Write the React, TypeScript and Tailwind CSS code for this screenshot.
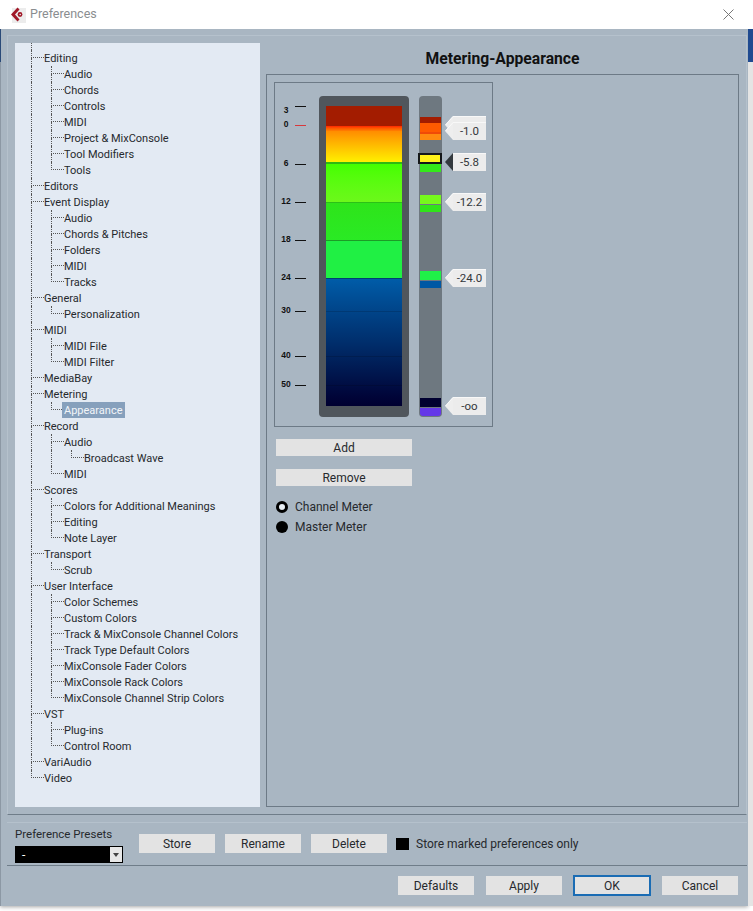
import React from "react";

type Node = { label: string; selected?: boolean; children?: Node[] };

const leaf = (...labels: string[]): Node[] => labels.map((label) => ({ label }));

const tree: Node[] = [
  { label: "Editing", children: leaf("Audio", "Chords", "Controls", "MIDI", "Project & MixConsole", "Tool Modifiers", "Tools") },
  { label: "Editors" },
  { label: "Event Display", children: leaf("Audio", "Chords & Pitches", "Folders", "MIDI", "Tracks") },
  { label: "General", children: leaf("Personalization") },
  { label: "MIDI", children: leaf("MIDI File", "MIDI Filter") },
  { label: "MediaBay" },
  { label: "Metering", children: [{ label: "Appearance", selected: true }] },
  { label: "Record", children: [{ label: "Audio", children: leaf("Broadcast Wave") }, { label: "MIDI" }] },
  { label: "Scores", children: leaf("Colors for Additional Meanings", "Editing", "Note Layer") },
  { label: "Transport", children: leaf("Scrub") },
  {
    label: "User Interface",
    children: leaf(
      "Color Schemes",
      "Custom Colors",
      "Track & MixConsole Channel Colors",
      "Track Type Default Colors",
      "MixConsole Fader Colors",
      "MixConsole Rack Colors",
      "MixConsole Channel Strip Colors"
    ),
  },
  { label: "VST", children: leaf("Plug-ins", "Control Room") },
  { label: "VariAudio" },
  { label: "Video" },
];

function TreeRows({ nodes, trail }: { nodes: Node[]; trail: boolean[] }) {
  return (
    <>
      {nodes.map((n, i) => {
        const last = i === nodes.length - 1;
        return (
          <React.Fragment key={n.label + i}>
            <div className="flex h-4 items-stretch">
              {trail.map((cont, k) => (
                <div key={k} className={`w-5 shrink-0 ${cont ? "border-l border-dotted border-[#555]" : ""}`} />
              ))}
              <div className="flex w-[13px] shrink-0 flex-col">
                <div className="h-2 border-b border-l border-dotted border-[#555]" />
                <div className={`h-2 ${last ? "" : "border-l border-dotted border-[#555]"}`} />
              </div>
              <span
                className={`h-4 text-[11px] leading-[18px] whitespace-nowrap ${
                  n.selected ? "-ml-0.5 bg-[#86a0bc] px-0.5 text-[#f2f5f9]" : "text-[#26292d]"
                }`}
              >
                {n.label}
              </span>
            </div>
            {n.children && <TreeRows nodes={n.children} trail={[...trail, !last]} />}
          </React.Fragment>
        );
      })}
    </>
  );
}

const ticks = [
  { l: "3", y: 106, ly: 110 },
  { l: "0", y: 125, ly: 124, red: true },
  { l: "6", y: 164, ly: 163 },
  { l: "12", y: 202, ly: 201 },
  { l: "18", y: 240, ly: 239 },
  { l: "24", y: 278, ly: 277 },
  { l: "30", y: 311, ly: 310 },
  { l: "40", y: 356, ly: 355 },
  { l: "50", y: 385, ly: 384 },
];

const chips = [
  { y: 117, h: 6, c: "bg-[#a31c00]" },
  { y: 123, h: 9, c: "bg-[#ff5a00]" },
  { y: 132, h: 2, c: "bg-[#f04a08]" },
  { y: 134, h: 6, c: "bg-[#ff8a10]" },
  { y: 164, h: 8, c: "bg-[#34ea1a]" },
  { y: 195, h: 9, c: "bg-[#76f81c]" },
  { y: 205, h: 7, c: "bg-[#30e41a]" },
  { y: 271, h: 9, c: "bg-[#20f048]" },
  { y: 281, h: 7, c: "bg-[#0058a4]" },
  { y: 398, h: 9, c: "bg-[#000030]" },
  { y: 408, h: 8, c: "bg-[#6438e8] rounded-b-[3px]" },
];

function Tag({ t, y, arrow = "#eeeeee", dark }: { t?: string; y: number; arrow?: string; dark?: boolean }) {
  return (
    <div className="absolute left-[445px] flex h-[18px] items-stretch" style={{ top: y - 83 }}>
      <svg width="8" height="18" className="shrink-0">
        <path d="M8 0 L0 9 L8 18 Z" fill={arrow} />
        {!dark && <path d="M8 0.5 L0.5 9" stroke="#fafafa" strokeWidth="1" fill="none" />}
      </svg>
      <div className="flex w-[33px] items-center justify-center border-t border-[#f8f8f8] bg-[#ececec] text-[11.5px] text-[#33373b]">
        {t}
      </div>
    </div>
  );
}

function Meter() {
  return (
    <div className="relative mt-[7px] h-[345px] w-[219px] border border-[#6d7a86] [&>*]:ml-[-275px]">
      {ticks.map((t) => (
        <React.Fragment key={t.l}>
          <div
            className="absolute left-[276px] w-5 text-center text-[8.5px] leading-[10px] font-bold text-[#111] [font-family:'Liberation_Sans',sans-serif]"
            style={{ top: t.ly - 88 }}
          >
            {t.l}
          </div>
          <div
            className={`absolute left-[295px] h-px w-[11px] ${t.red ? "bg-[#d8383c]" : "bg-[#111]"}`}
            style={{ top: t.y - 83 }}
          />
        </React.Fragment>
      ))}
      <div className="absolute left-[319px] top-[13px] flex h-[321px] w-[90px] flex-col rounded-[4px] bg-[#50565c] pb-[11px] pl-[7px] pr-[7px] pt-[10px]">
        <div className="h-[20px] bg-[#a31c00]" />
        <div className="h-[5px] bg-gradient-to-b from-[#ff2000] to-[#ff8000]" />
        <div className="h-[31px] bg-gradient-to-b from-[#ff8c00] to-[#fff000]" />
        <div className="h-[2px] bg-[#2fb812]" />
        <div className="h-[38px] bg-gradient-to-b from-[#44ff00] to-[#6cf81a]" />
        <div className="h-[38px] border-t border-[#2cc018] bg-gradient-to-b from-[#2ee41a] to-[#2aea24]" />
        <div className="h-[38px] border-t border-[#1c9c28] bg-[#20f044]" />
        <div className="relative h-[128px] border-t border-[#004070] bg-gradient-to-b from-[#005ca8] via-[#002e6c] to-[#000030]">
          <div className="absolute inset-x-0 top-[32px] h-px bg-black/15" />
          <div className="absolute inset-x-0 top-[77px] h-px bg-black/15" />
          <div className="absolute inset-x-0 top-[106px] h-px bg-black/15" />
        </div>
      </div>
      <div className="absolute left-[419px] top-[13px] h-[321px] w-[23px] rounded-[4px] bg-[#6e7880]" />
      {chips.map((c) => (
        <div key={c.y} className={`absolute left-[420px] w-[21px] ${c.c}`} style={{ top: c.y - 83, height: c.h }} />
      ))}
      <div className="absolute left-[418px] top-[70px] h-[11px] w-[24px] border-2 border-[#15181a] bg-[#fff21a]" />
      <Tag y={116} />
      <Tag t="-1.0" y={122} />
      <Tag t="-5.8" y={153} arrow="#33393e" dark />
      <Tag t="-12.2" y={193} />
      <Tag t="-24.0" y={269} />
      <Tag t="-oo" y={397} />
    </div>
  );
}

function Btn({ children, w, h = "h-[19px]", focus }: { children: React.ReactNode; w: string; h?: string; focus?: boolean }) {
  return (
    <button
      className={`${w} ${h} flex items-center justify-center bg-[#e3e3e3] text-[#26292d] ${
        focus ? "border-2 border-[#1a6cb4]" : ""
      }`}
    >
      {children}
    </button>
  );
}

export default function App() {
  return (
    <div className="flex h-[911px] w-[753px] items-start bg-white text-[12px] [font-family:'Roboto',sans-serif]">
      <div className="flex h-[906px] w-[748px] flex-col shadow-[0_1px_4px_rgba(0,0,0,0.35)]">
        <div className="flex h-[29px] shrink-0 items-center justify-between bg-white pl-[10px] pr-[14px]">
          <div className="flex items-center gap-[4px]">
            <svg width="16" height="16" viewBox="0 0 16 16">
              <rect x="2" y="1" width="14" height="15" fill="#ececec" />
              <path d="M7.5 0.5 L1 7.5 L7.5 14.5 L9.5 12.5 L5 7.5 L9.5 2.5 Z" fill="#a01828" />
              <circle cx="10" cy="7.5" r="2.4" fill="#a01828" />
              <circle cx="10.2" cy="7.5" r="0.8" fill="#f2e4e4" />
            </svg>
            <span className="text-[12.5px] text-[#8a8d90]">Preferences</span>
          </div>
          <svg width="11" height="11" viewBox="0 0 11 11" stroke="#777" strokeWidth="1">
            <path d="M0.5 0.5 L10.5 10.5 M10.5 0.5 L0.5 10.5" />
          </svg>
        </div>
        <div className="flex flex-1">
          <div className="flex w-px shrink-0 flex-col bg-[#8c98a4]">
            <div className="h-[33px] bg-[#2a4a78]" />
          </div>
          <div className="flex-1 bg-[#a9b6c2] pl-[6px] pr-px pt-[6px]">
            <div className="h-[780px] border border-[#b5c1cc] border-b-[#6f7d89] px-[7px] pt-[7px]">
              <div className="flex h-[764px] gap-[6px]">
                <div className="h-full w-[245px] overflow-hidden bg-[#e3eaf3] pl-4">
                  <div className="h-[7px] border-l border-dotted border-[#555]" />
                  <TreeRows nodes={tree} trail={[]} />
                </div>
                <div className="flex h-full w-[473px] flex-col">
                  <div className="flex h-[31px] shrink-0 items-center justify-center text-[15.7px] font-bold text-[#111]">
                    Metering-Appearance
                  </div>
                  <div className="flex-1 border border-[#6d7a86] px-[7px]">
                    <Meter />
                    <div className="mt-[12px] flex w-[136px] flex-col gap-[13px] pl-[2px]">
                      <Btn w="w-[136px]" h="h-[17px]">Add</Btn>
                      <Btn w="w-[136px]" h="h-[17px]">Remove</Btn>
                    </div>
                    <div className="mt-[13px] flex flex-col gap-1 pl-[2px] text-[#26292d]">
                      <div className="flex h-4 items-center gap-[7px]">
                        <span className="h-[12px] w-[12px] rounded-full border-[3px] border-black bg-[#e8eef4]" />
                        Channel Meter
                      </div>
                      <div className="flex h-4 items-center gap-[7px]">
                        <span className="h-[12px] w-[12px] rounded-full bg-black" />
                        Master Meter
                      </div>
                    </div>
                  </div>
                </div>
              </div>
            </div>
            <div className="mt-[7px] flex h-[44px] items-start border-y border-[#6f7d89] border-t-[#b5c1cc] pl-[8px] text-[#26292d]">
              <div className="mt-[3px] flex w-[124px] flex-col">
                <span className="h-4 text-[11.5px] leading-4">Preference Presets</span>
                <div className="mt-1 flex h-[17px] w-[108px] items-center justify-between bg-black pl-[7px] pr-px text-white">
                  <span>-</span>
                  <span className="flex h-[15px] w-3 items-center justify-center bg-[#e8e8e8]">
                    <svg width="6" height="4"><path d="M0 0 H6 L3 4 Z" fill="#444" /></svg>
                  </span>
                </div>
              </div>
              <div className="mt-[11px] flex items-center gap-[10px]">
                <Btn w="w-[76px]">Store</Btn>
                <Btn w="w-[76px]">Rename</Btn>
                <Btn w="w-[76px]">Delete</Btn>
              </div>
              <div className="ml-[9px] mt-[11px] flex h-[19px] items-center gap-[7px]">
                <span className="h-[12px] w-[13px] bg-black" />
                Store marked preferences only
              </div>
            </div>
            <div className="flex items-center justify-end gap-[11px] pr-[9px] pt-[9px]">
              <div className="mr-px">
                <Btn w="w-[76px]">Defaults</Btn>
              </div>
              <Btn w="w-[76px]">Apply</Btn>
              <Btn w="w-[78px]" h="h-[21px]" focus>OK</Btn>
              <Btn w="w-[76px]">Cancel</Btn>
            </div>
          </div>
        </div>
      </div>
      <div className="flex h-[906px] w-[5px] flex-col bg-[#e4e4e4]">
        <div className="h-[29px] bg-white" />
        <div className="h-[33px] bg-[#1f4a90]" />
      </div>
    </div>
  );
}
